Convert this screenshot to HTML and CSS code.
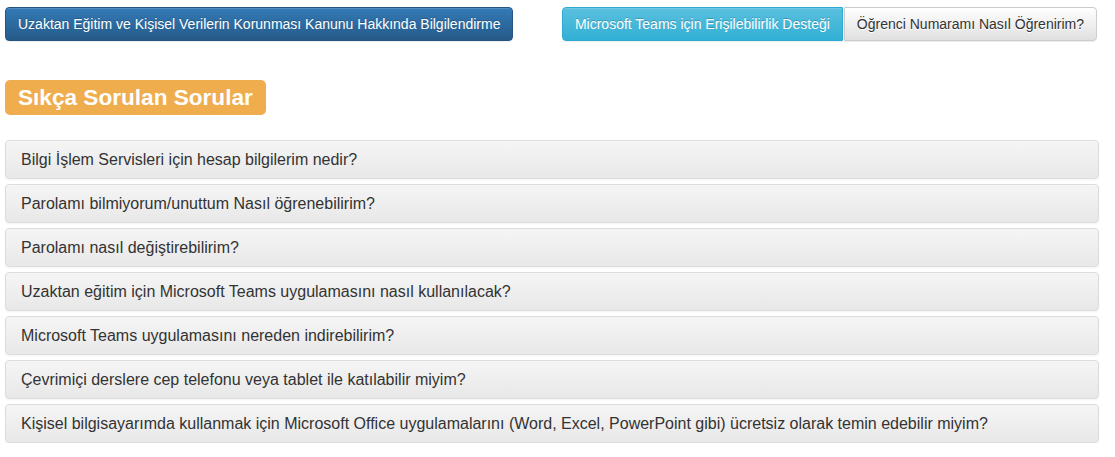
FILE: index.html
```html
<!DOCTYPE html>
<html lang="tr">
<head>
<meta charset="utf-8">
<link rel="stylesheet" href="styles.css">
</head>
<body>
<div class="page">
  <div class="topbar">
    <a class="btn btn-primary">Uzaktan Eğitim ve Kişisel Verilerin Korunması Kanunu Hakkında Bilgilendirme</a>
    <div class="btn-group">
      <a class="btn btn-info">Microsoft Teams için Erişilebilirlik Desteği</a>
      <a class="btn btn-default">Öğrenci Numaramı Nasıl Öğrenirim?</a>
    </div>
  </div>
  <h2 class="badge-title">Sıkça Sorulan Sorular</h2>
  <div class="faq">
    <div class="panel">Bilgi İşlem Servisleri için hesap bilgilerim nedir?</div>
    <div class="panel">Parolamı bilmiyorum/unuttum Nasıl öğrenebilirim?</div>
    <div class="panel">Parolamı nasıl değiştirebilirim?</div>
    <div class="panel">Uzaktan eğitim için Microsoft Teams uygulamasını nasıl kullanılacak?</div>
    <div class="panel">Microsoft Teams uygulamasını nereden indirebilirim?</div>
    <div class="panel">Çevrimiçi derslere cep telefonu veya tablet ile katılabilir miyim?</div>
    <div class="panel">Kişisel bilgisayarımda kullanmak için Microsoft Office uygulamalarını (Word, Excel, PowerPoint gibi) ücretsiz olarak temin edebilir miyim?</div>
  </div>
</div>
</body>
</html>
```

FILE: styles.css
```css
* { box-sizing: border-box; }
html, body { margin: 0; padding: 0; background: #fff; }
body {
  font-family: "Liberation Sans", Arial, sans-serif;
  color: #333;
}
.page {
  padding: 7px 18px 0 5px;
}
.topbar {
  display: flex;
  justify-content: space-between;
  align-items: flex-start;
}
.btn-group { display: flex; }
.btn {
  display: inline-block;
  height: 34px;
  line-height: 32px;
  padding: 0 12px;
  font-size: 14px;
  border: 1px solid transparent;
  border-radius: 4px;
  white-space: nowrap;
  cursor: pointer;
  text-shadow: 0 -1px 0 rgba(0,0,0,0.2);
  box-shadow: inset 0 1px 0 rgba(255,255,255,0.15), 0 1px 1px rgba(0,0,0,0.075);
}
.btn-primary {
  color: #fff;
  background: linear-gradient(to bottom, #337ab7 0%, #265a88 100%);
  border-color: #245580;
}
.btn-group .btn-info {
  color: #fff;
  background: linear-gradient(to bottom, #5bc0de 0%, #31b0d5 100%);
  border-color: #2aabd2;
  border-top-right-radius: 0;
  border-bottom-right-radius: 0;
}
.btn-group .btn-default {
  color: #333;
  text-shadow: 0 1px 0 #fff;
  background: linear-gradient(to bottom, #fff 0%, #e0e0e0 100%);
  border-color: #ccc;
  border-top-left-radius: 0;
  border-bottom-left-radius: 0;
  margin-left: 1px;
}
.badge-title {
  display: inline-block;
  margin: 39px 0 0 0;
  height: 35px;
  line-height: 35px;
  padding: 0 13px;
  background: #f0ad4e;
  color: #fff;
  font-size: 22.6px;
  font-weight: bold;
  border-radius: 5px;
}
.faq {
  margin-top: 25px;
  display: flex;
  flex-direction: column;
  gap: 5px;
  width: 1094px;
}
.panel {
  height: 39px;
  line-height: 37px;
  padding: 0 15px;
  font-size: 16px;
  color: #333;
  border: 1px solid #ddd;
  border-radius: 4px;
  background: linear-gradient(to bottom, #f5f5f5 0%, #e8e8e8 100%);
  box-shadow: 0 1px 2px rgba(0,0,0,0.05);
}
```
